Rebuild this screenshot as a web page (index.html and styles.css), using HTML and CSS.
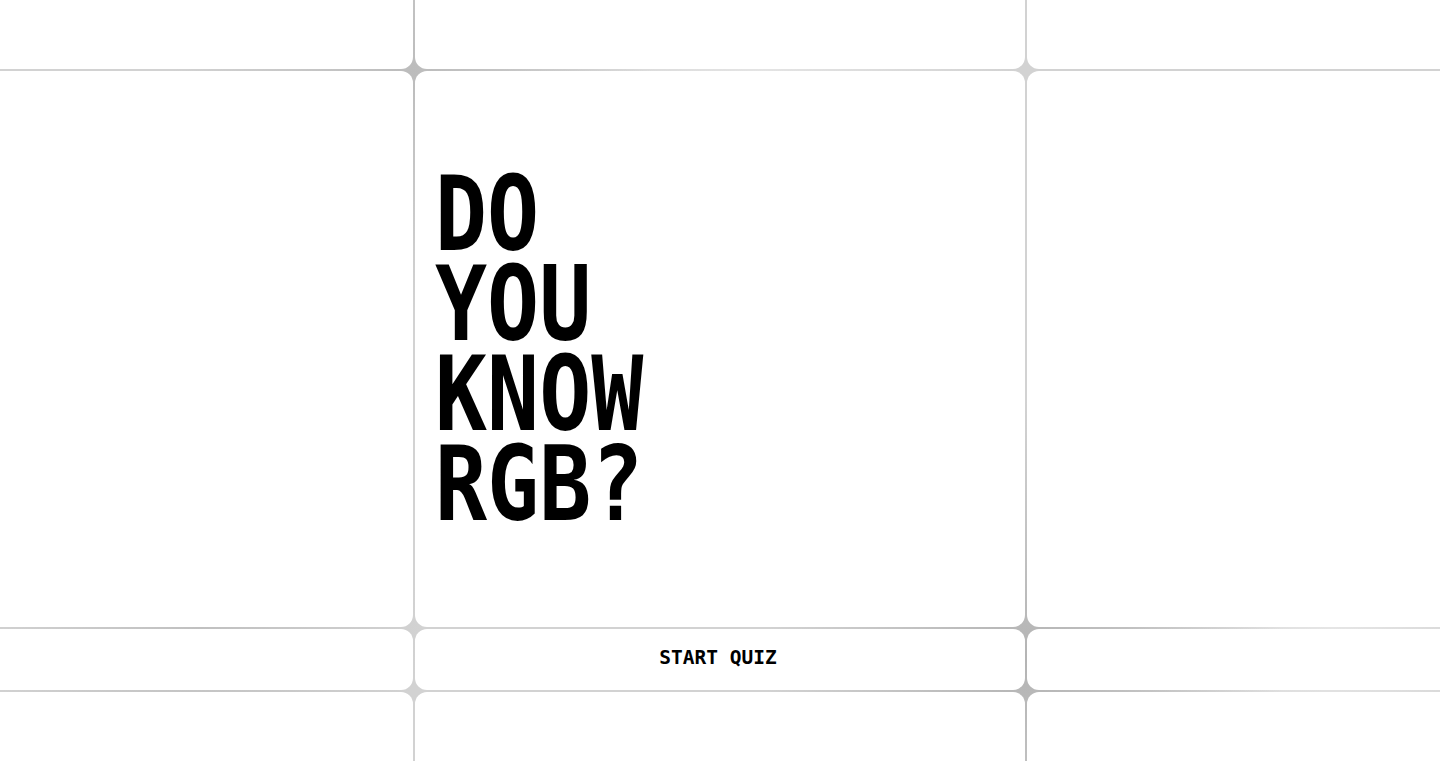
FILE: index.html
```html
<!DOCTYPE html>
<html lang="en">
<head>
  <meta charset="UTF-8" />
  <title>Do you know RGB?</title>
  <link rel="stylesheet" href="styles.css">
</head>
<body>
  <div class="board">
    <div class="cell"></div>
    <div class="cell"></div>
    <div class="cell"></div>

    <div class="cell"></div>
    <div class="cell title-cell">
      <h1 class="title">DO<br>YOU<br>KNOW<br>RGB?</h1>
    </div>
    <div class="cell"></div>

    <div class="cell"></div>
    <button class="cell start-btn">START QUIZ</button>
    <div class="cell"></div>

    <div class="cell"></div>
    <div class="cell"></div>
    <div class="cell"></div>
  </div>
</body>
</html>
```

FILE: styles.css
```css
html, body {
  margin: 0;
  height: 100%;
  overflow: hidden;
}

body {
  /* the gaps between the tiles show this through */
  background:
    radial-gradient(circle at 1025px 660px, #b4b4b4 0, rgba(180, 180, 180, 0) 260px),
    radial-gradient(circle at 413px 70px, #bcbcbc 0, rgba(188, 188, 188, 0) 240px),
    radial-gradient(circle at 200px 628px, #c0c0c0 0, rgba(192, 192, 192, 0) 220px),
    radial-gradient(circle at 760px 60px, #e4e4e4 0, rgba(228, 228, 228, 0) 260px),
    radial-gradient(circle at 1330px 640px, #e6e6e6 0, rgba(230, 230, 230, 0) 200px),
    #d2d2d2;
  font-family: "DejaVu Sans Mono", "Liberation Mono", monospace;
}

/* tiles run past the window so only the inner corners show */
.board {
  display: grid;
  grid-template-columns: 1fr 610px 1fr;
  grid-template-rows: 109px 556px 61px 109px;
  gap: 2px;
  margin: -40px;
  height: calc(100% + 80px);
}

.cell {
  background: #fff;
  border-radius: 12px;
}

.title-cell {
  display: flex;
  align-items: center;
  padding-left: 20px;
}

.title {
  margin: 0;
  font-size: 103px;
  font-weight: bold;
  line-height: 90px;
  color: #000;
  transform: scaleX(0.84);
  transform-origin: left center;
}

.start-btn {
  border: none;
  margin: 0;
  padding: 0 4px 4px 0;
  font-family: inherit;
  font-size: 19.5px;
  font-weight: bold;
  color: #000;
  cursor: pointer;
}
```
